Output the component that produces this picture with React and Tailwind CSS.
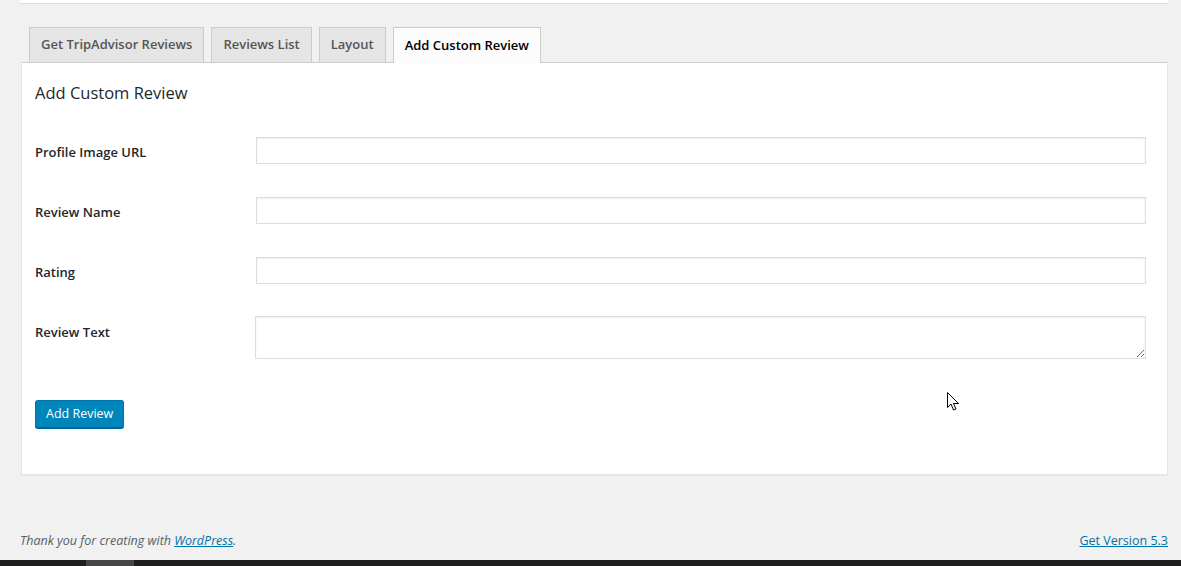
import React from 'react';

const tabs = [
  { label: 'Get TripAdvisor Reviews' },
  { label: 'Reviews List' },
  { label: 'Layout' },
  { label: 'Add Custom Review', active: true },
];

const fields = ['Profile Image URL', 'Review Name', 'Rating'];

const App = () => {
  return (
    <div className="relative min-h-[566px] bg-[#f1f1f1] font-['Open_Sans',sans-serif] text-[#23282d] flex flex-col">
      {/* top box remnant */}
      <div className="ml-[20px] mr-[13px] h-[4px] bg-white border-b border-[#dcdcdc]" />

      {/* Tabs */}
      <div className="ml-[29px] mt-[23px] flex gap-[7px] items-end">
        {tabs.map((t) => (
          <div
            key={t.label}
            className={
              t.active
                ? 'h-[36px] -mb-px px-[11px] flex items-center border border-[#ccc] border-b-0 bg-[#fcfcfc] text-[13px] font-semibold text-[#000] relative z-10'
                : 'h-[35px] px-[11px] flex items-center border border-[#ccc] border-b-0 bg-[#e5e5e5] text-[13px] font-semibold text-[#555]'
            }
          >
            {t.label}
          </div>
        ))}
      </div>

      {/* Panel */}
      <div className="ml-[21px] mr-[13px] bg-white border border-[#e5e5e5] border-t-[#ccc] shadow-[0_1px_1px_rgba(0,0,0,0.04)] px-[13px] pt-[19px] pb-[46px]">
        <h2 className="text-[16.5px] leading-[22px] text-[#23282d] mb-[17px]">Add Custom Review</h2>

        {fields.map((f) => (
          <div key={f} className="flex pt-[16px] pb-[17px]">
            <label className="w-[221px] shrink-0 mt-[5px] text-[13px] leading-[20px] font-semibold text-[#23282d]">{f}</label>
            <input
              type="text"
              className="flex-1 mr-[8px] h-[27px] border border-[#ddd] bg-white shadow-[inset_0_1px_2px_rgba(0,0,0,0.07)] outline-none"
            />
          </div>
        ))}

        <div className="flex pt-[15px]">
          <label className="w-[220px] shrink-0 mt-[6px] text-[13px] leading-[20px] font-semibold text-[#23282d]">Review Text</label>
          <textarea
            className="flex-1 mr-[8px] h-[43px] border border-[#ddd] bg-white shadow-[inset_0_1px_2px_rgba(0,0,0,0.07)] outline-none block"
          />
        </div>

        <button className="mt-[41px] h-[28px] px-[10px] rounded-[3px] bg-[#0085ba] border border-[#0073aa] border-b-[#006799] shadow-[0_1px_0_#006799] text-white text-[12.5px] leading-[26px]">
          Add Review
        </button>
      </div>

      {/* Footer */}
      <div className="ml-[20px] mr-[13px] mt-[56px] flex justify-between text-[12.5px] leading-[20px]">
        <p className="italic text-[#555d66]">
          Thank you for creating with <a href="#" className="text-[#0073aa] underline">WordPress</a>.
        </p>
        <a href="#" className="text-[#0073aa] underline">Get Version 5.3</a>
      </div>

      {/* bottom dark bar */}
      <div className="mt-auto h-[6px] bg-[#1e1e1e] flex">
        <div className="ml-[86px] w-[48px] bg-[#464646]" />
      </div>

      {/* mouse cursor */}
      <svg className="absolute left-[947px] top-[392px]" width="13" height="20" viewBox="0 0 13 20">
        <path d="M0.5 0.5 L0.5 15.5 L4 12 L6.5 18 L9 17 L6.5 11.5 L11.5 11.5 Z" fill="#fff" stroke="#000" strokeWidth="1" />
      </svg>
    </div>
  );
};

export default App;
